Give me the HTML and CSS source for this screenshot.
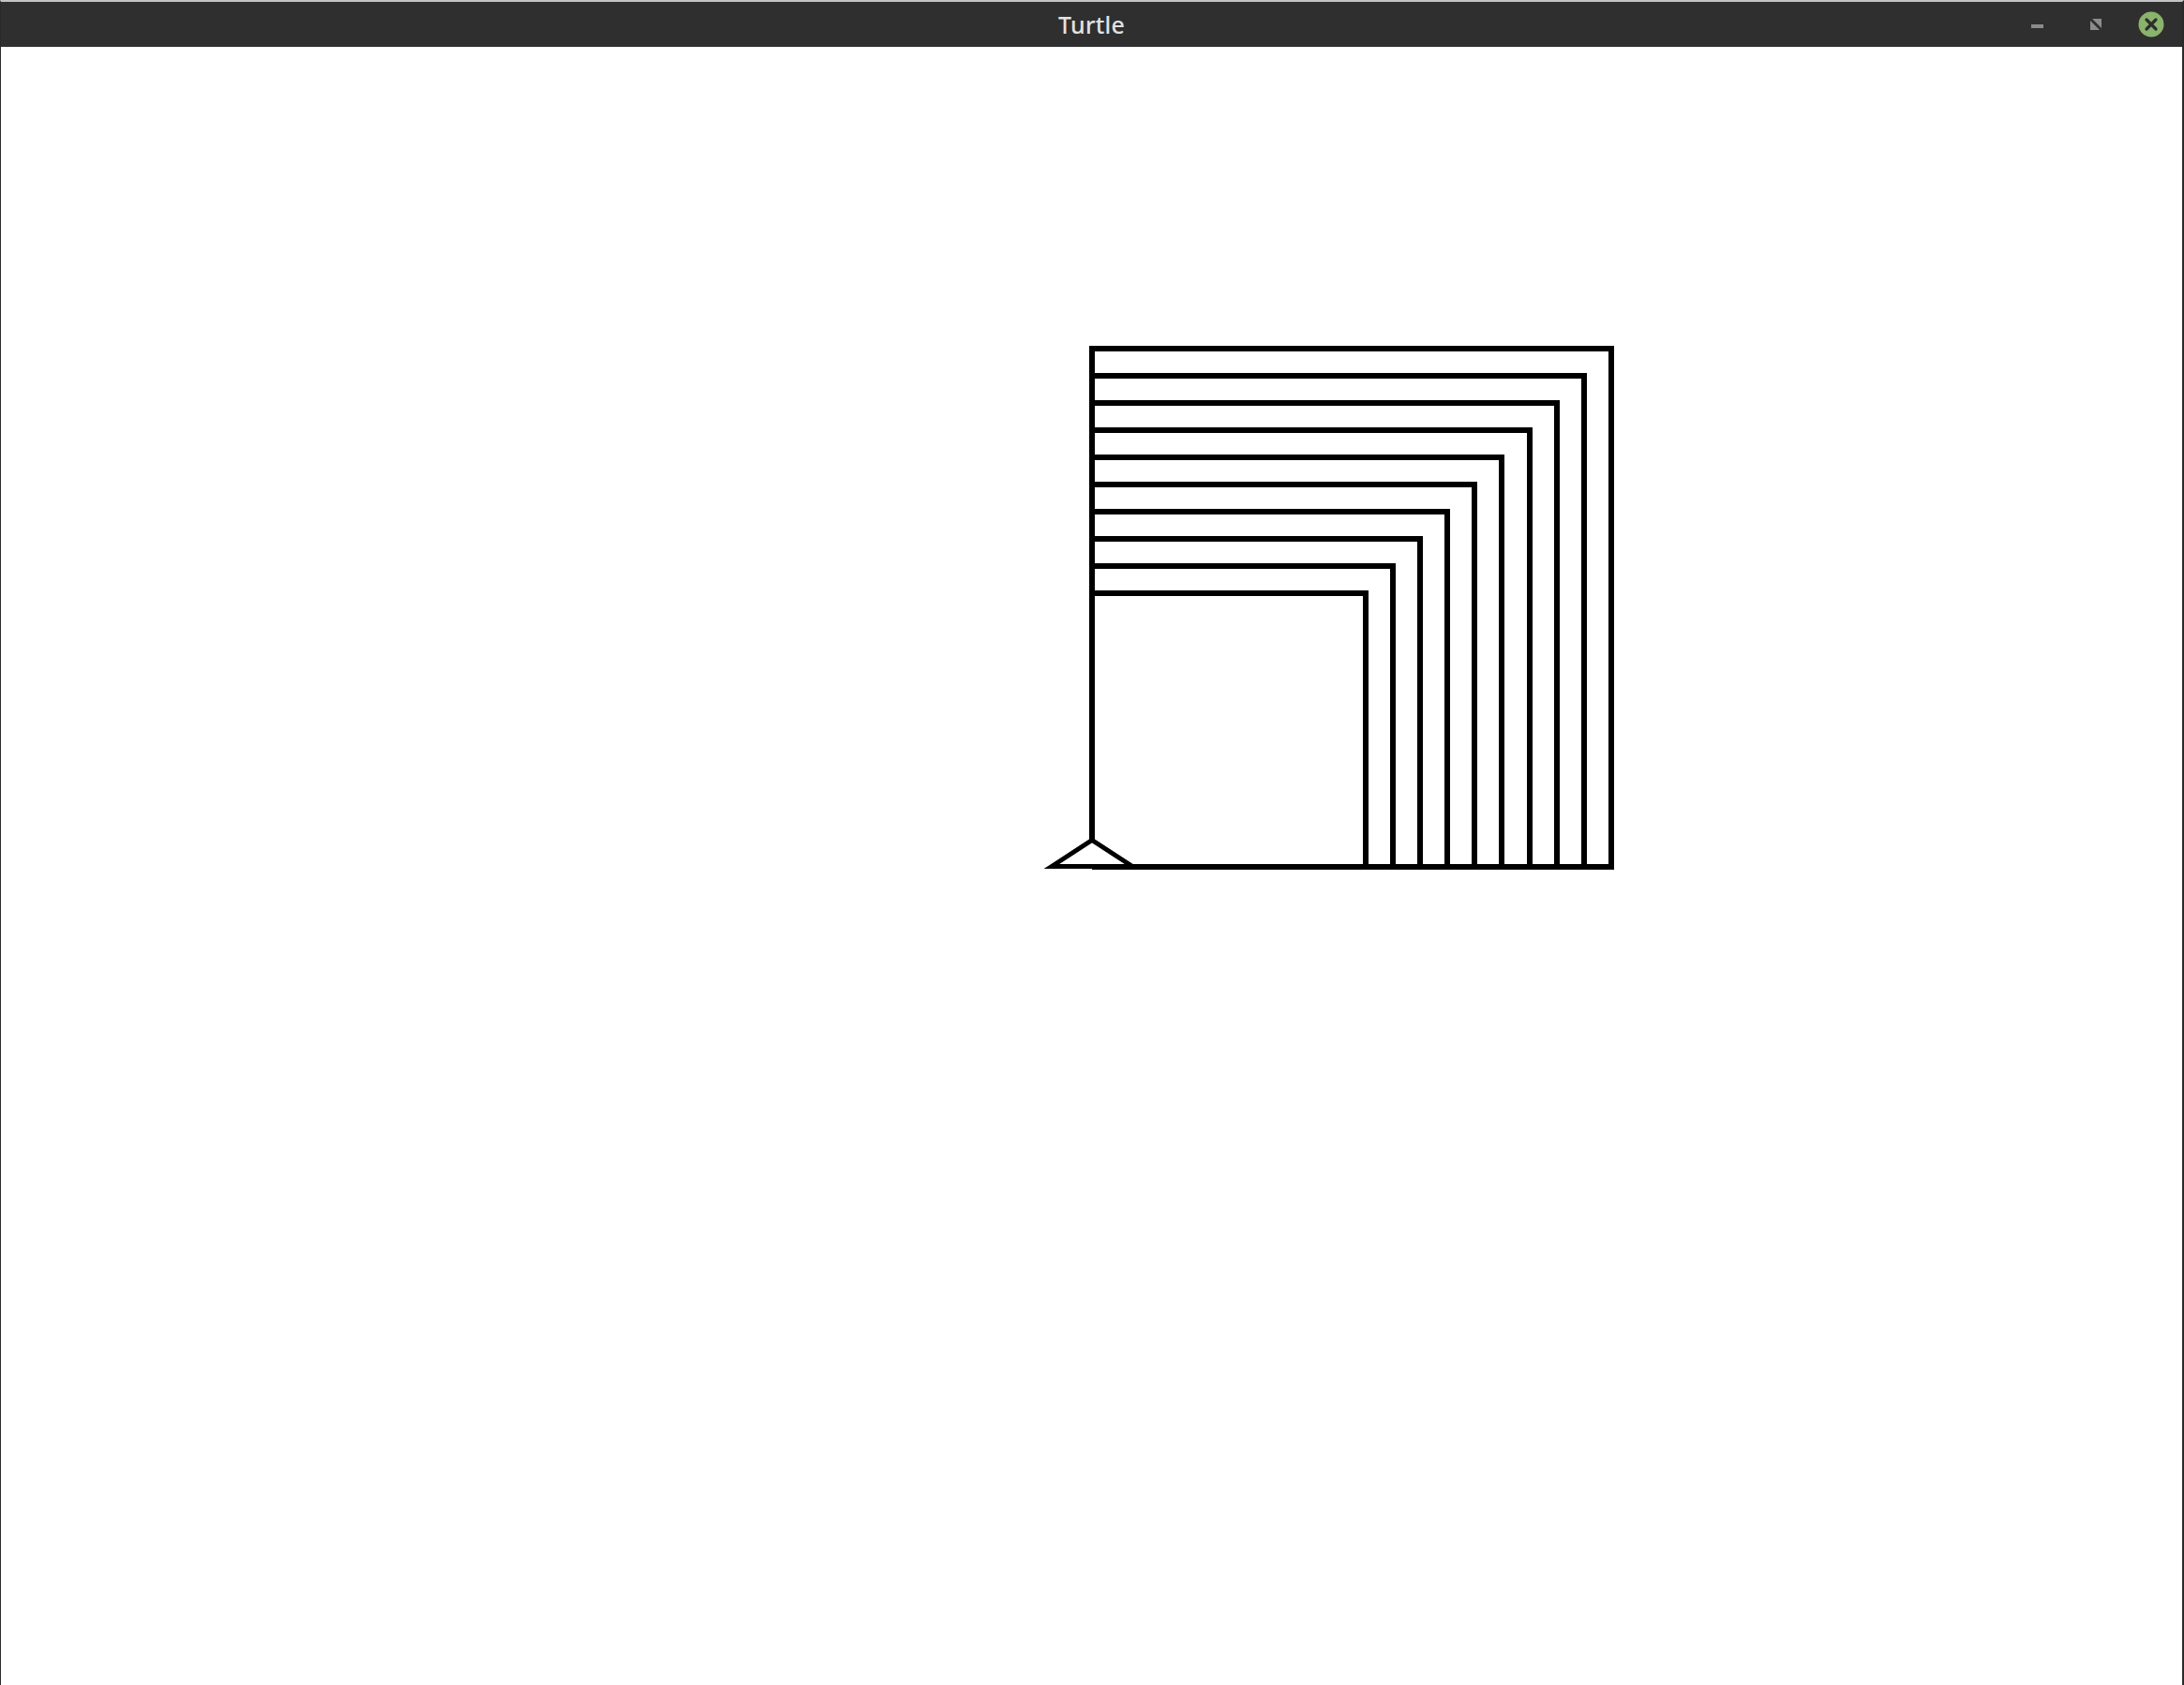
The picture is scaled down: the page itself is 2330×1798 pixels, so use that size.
FILE: index.html
```html
<!DOCTYPE html>
<html>
<head>
<meta charset="utf-8">
<title>Turtle</title>
<link rel="stylesheet" href="styles.css">
</head>
<body>
<div class="window">
  <header class="titlebar">
    <div class="tb-left"></div>
    <div class="tb-title">Turtle</div>
    <div class="tb-right">
      <span class="btn btn-min"></span>
      <span class="btn btn-max">
        <svg width="14" height="14" viewBox="0 0 14 14">
          <polygon points="3,1 13,1 13,11" fill="#8c8c8c"/>
          <polygon points="1,3 1,13 11,13" fill="#8c8c8c"/>
        </svg>
      </span>
      <span class="btn btn-close">
        <svg width="28" height="28" viewBox="0 0 28 28">
          <circle cx="14" cy="14" r="13.5" fill="#8ab36b"/>
          <path d="M9 9 L19 19 M19 9 L9 19" stroke="#2e2e2e" stroke-width="3.2" stroke-linecap="round"/>
        </svg>
      </span>
    </div>
  </header>
  <main class="canvas">
    <svg class="drawing" width="2326" height="1748" viewBox="0 0 2326 1748">
      <g fill="none" stroke="#000" stroke-width="6" stroke-linejoin="miter">
        <path d="M1165 875 H1457 V583 H1165 V875"/>
        <path d="M1165 875 H1486 V554 H1165 V875"/>
        <path d="M1165 875 H1515 V525 H1165 V875"/>
        <path d="M1165 875 H1544 V496 H1165 V875"/>
        <path d="M1165 875 H1573 V467 H1165 V875"/>
        <path d="M1165 875 H1602 V438 H1165 V875"/>
        <path d="M1165 875 H1632 V409 H1165 V875"/>
        <path d="M1165 875 H1661 V380 H1165 V875"/>
        <path d="M1165 875 H1690 V351 H1165 V875"/>
        <path d="M1165 875 H1719 V322 H1165 V875"/>
      </g>
      <polygon points="1122,874.5 1165,846.5 1208,874.5" fill="#fff" stroke="#000" stroke-width="5" stroke-linejoin="miter"/>
    </svg>
  </main>
</div>
</body>
</html>
```

FILE: styles.css
```css
html, body {
  margin: 0;
  padding: 0;
  background: #ffffff;
}

.window {
  width: 2330px;
  height: 1798px;
  display: flex;
  flex-direction: column;
  box-sizing: border-box;
  border-top: 2px solid #c4c4c4;
  border-left: 1px solid #2a2a2a;
  border-right: 2px solid #2a2a2a;
  overflow: hidden;
}

.titlebar {
  height: 48px;
  flex: 0 0 48px;
  background: #2f2f2f;
  display: grid;
  grid-template-columns: 1fr auto 1fr;
  align-items: center;
}

.tb-title {
  font-family: "Noto Sans", "Open Sans", sans-serif;
  font-weight: 500;
  font-size: 25px;
  line-height: 48px;
  color: #e2e2e2;
  letter-spacing: 0.2px;
}

.tb-right {
  display: flex;
  justify-content: flex-end;
  align-items: center;
  gap: 38px;
  padding-right: 19px;
}

.btn {
  display: flex;
  align-items: center;
  justify-content: center;
}

.btn-min {
  width: 13px;
  height: 4px;
  background: #8c8c8c;
  margin-top: 3px;
  margin-right: 11px;
}

.btn-max {
  width: 14px;
  height: 14px;
}

.btn-max svg, .btn-close svg {
  display: block;
}

.btn-close {
  width: 28px;
  height: 28px;
}

.canvas {
  flex: 1 1 auto;
  background: #ffffff;
  position: relative;
}

.drawing {
  display: block;
  margin-left: -1px;
}
```
